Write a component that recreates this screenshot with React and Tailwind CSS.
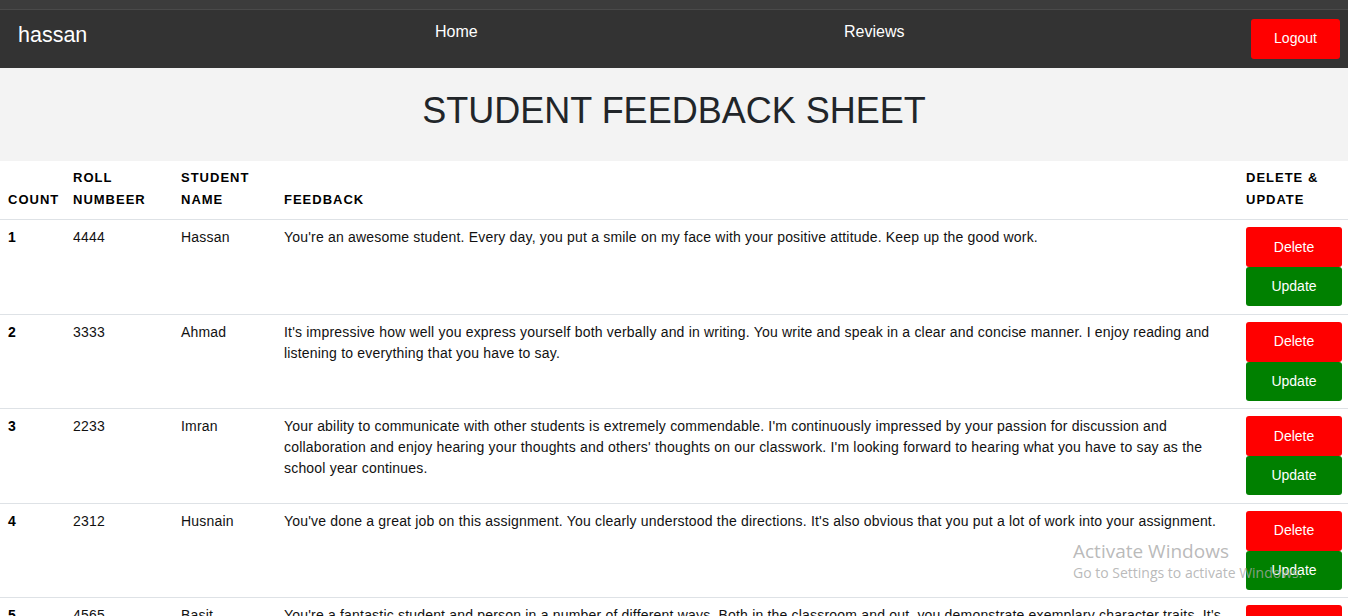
import React from "react";

const rows = [
  { n: 1, roll: "4444", name: "Hassan", fb: "You're an awesome student. Every day, you put a smile on my face with your positive attitude. Keep up the good work." },
  { n: 2, roll: "3333", name: "Ahmad", fb: "It's impressive how well you express yourself both verbally and in writing. You write and speak in a clear and concise manner. I enjoy reading and listening to everything that you have to say." },
  { n: 3, roll: "2233", name: "Imran", fb: "Your ability to communicate with other students is extremely commendable. I'm continuously impressed by your passion for discussion and collaboration and enjoy hearing your thoughts and others' thoughts on our classwork. I'm looking forward to hearing what you have to say as the school year continues." },
  { n: 4, roll: "2312", name: "Husnain", fb: "You've done a great job on this assignment. You clearly understood the directions. It's also obvious that you put a lot of work into your assignment." },
  { n: 5, roll: "4565", name: "Basit", fb: "You're a fantastic student and person in a number of different ways. Both in the classroom and out, you demonstrate exemplary character traits. It's been a joy to have you in class and to watch you grow this year." },
];

export default function App() {
  return (
    <div className="relative min-h-[616px] bg-white text-[#212529]" style={{ fontFamily: '"Liberation Sans", Arial, sans-serif' }}>
      <div className="h-[10px] bg-[#3c3c3c] border-b border-[#4a4a4a]" />
      <nav className="flex h-[58px] bg-[#333333] text-white">
        <div className="w-[435px] pl-[18px] pt-[12px] text-[21.5px] leading-[26px]">hassan</div>
        <div className="w-[409px] pt-[12px] text-[16px] leading-[20px]">Home</div>
        <div className="pt-[12px] text-[16px] leading-[20px]">Reviews</div>
        <div className="ml-auto mr-[8px] pt-[9px]">
          <button className="h-[40px] w-[89px] rounded-[3px] bg-[#ff0000] pb-[1px] text-[14px] text-white">Logout</button>
        </div>
      </nav>
      <div className="flex h-[93px] justify-center bg-[#f3f3f3] pt-[23px]">
        <h1 className="text-[36px] leading-[40px] text-[#212529]">STUDENT FEEDBACK SHEET</h1>
      </div>
      <table className="w-full table-fixed border-collapse text-[14px] leading-[21px]">
        <thead>
          <tr className="border-b border-[#dee2e6] text-left align-bottom text-[13px] font-bold leading-[22px] tracking-[1px] text-black">
            <th className="w-[65px] pl-[8px] pr-2 pt-[6px] pb-[8px]">COUNT</th>
            <th className="w-[108px] pl-[8px] pr-2 pt-[6px] pb-[8px]">ROLL<br />NUMBEER</th>
            <th className="w-[103px] pl-[8px] pr-2 pt-[6px] pb-[8px]">STUDENT<br />NAME</th>
            <th className="pl-[8px] pr-2 pt-[6px] pb-[8px]">FEEDBACK</th>
            <th className="w-[110px] pl-[8px] pr-0 pt-[6px] pb-[8px]">DELETE &amp;<br />UPDATE</th>
          </tr>
        </thead>
        <tbody className="tracking-[0.19px]">
          {rows.map((r) => (
            <tr key={r.n} className="border-b border-[#dee2e6] align-top text-[#111]">
              <td className="pl-[8px] pr-2 pt-[7px] font-bold text-black">{r.n}</td>
              <td className="pl-[8px] pr-2 pt-[7px]">{r.roll}</td>
              <td className="pl-[8px] pr-2 pt-[7px]">{r.name}</td>
              <td className="pl-[8px] pr-[8px] pt-[7px]">{r.fb}</td>
              <td className="pl-[8px] pr-0 pt-[7px] pb-[7.5px] tracking-normal">
                <button className="block h-[40px] w-[96px] rounded-[3px] bg-[#ff0000] text-[14px] text-white">Delete</button>
                <button className="block h-[39px] w-[96px] rounded-[3px] bg-[#008000] text-[14px] text-white">Update</button>
              </td>
            </tr>
          ))}
        </tbody>
      </table>
      <div className="pointer-events-none absolute left-[1073px] top-[539px] text-[#a8a8a8]/80" style={{ fontFamily: '"Open Sans", "Noto Sans", sans-serif' }}>
        <div className="text-[19px] leading-[24px]">Activate Windows</div>
        <div className="text-[14px] leading-[20px]">Go to Settings to activate Windows.</div>
      </div>
    </div>
  );
}
